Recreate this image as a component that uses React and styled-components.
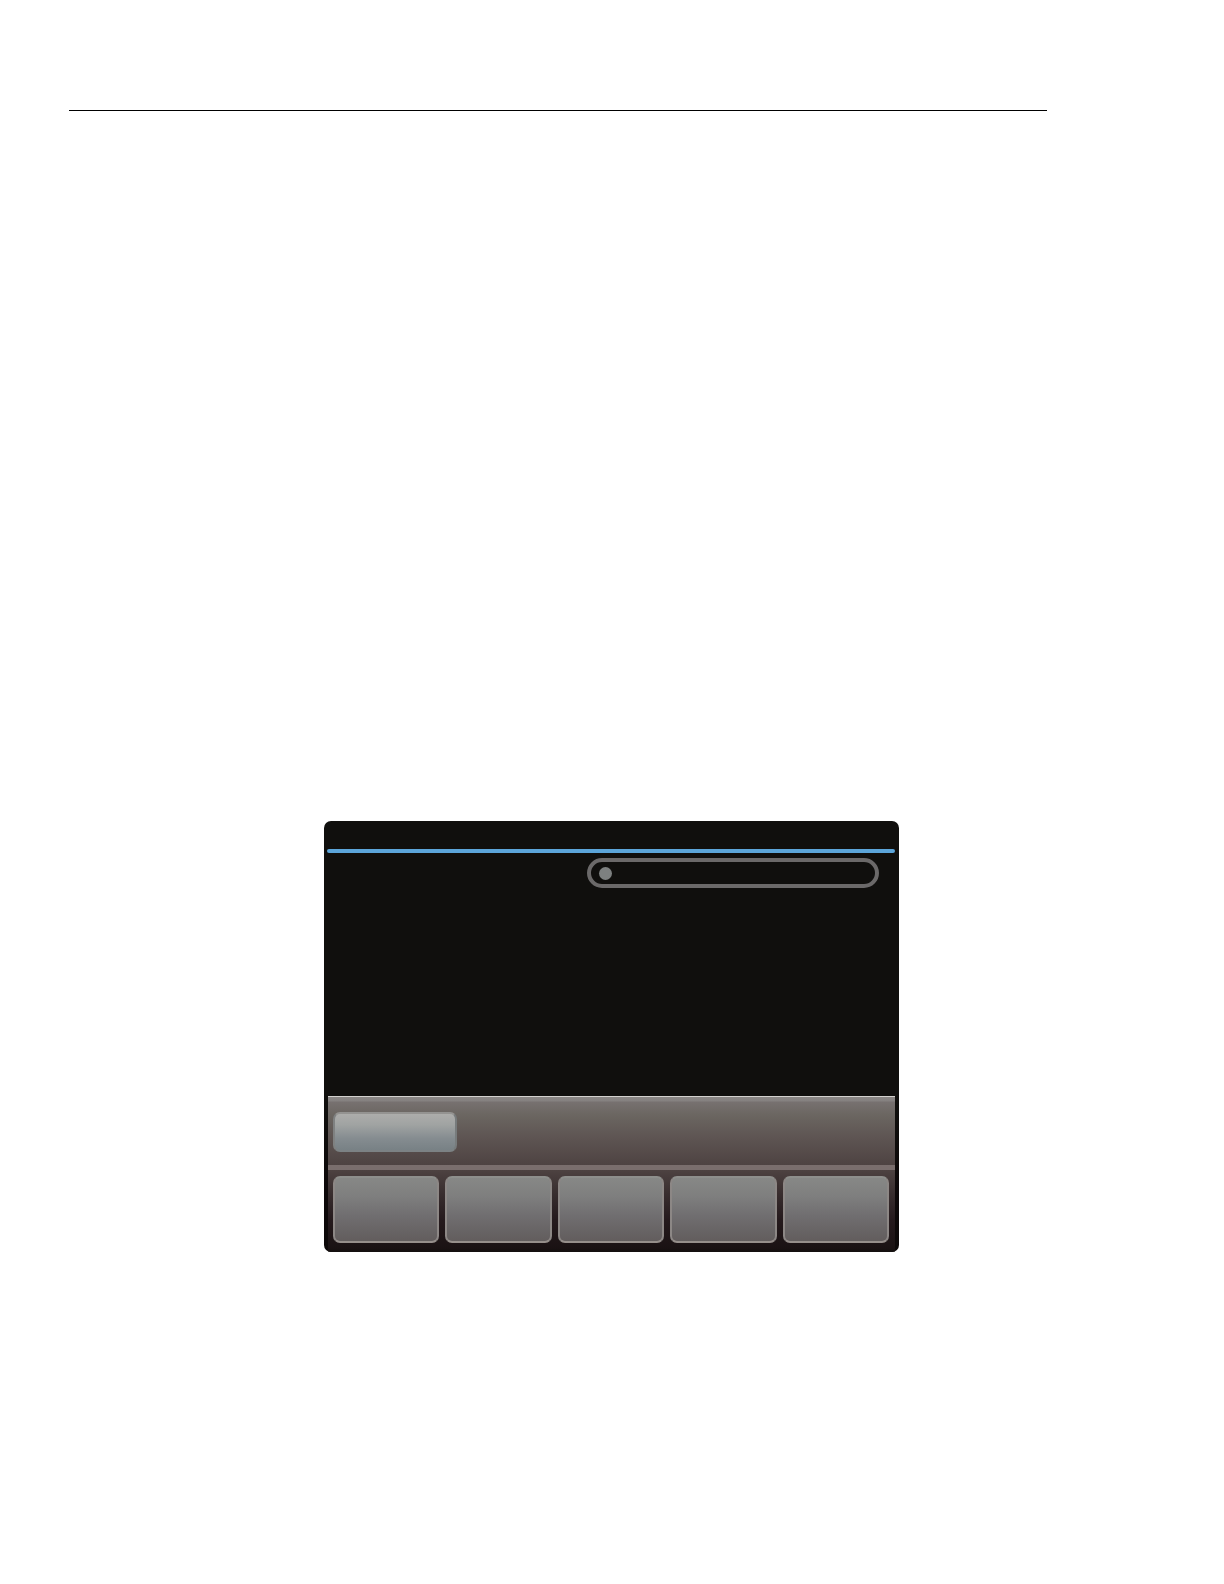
import React from "react";
import styled, { createGlobalStyle } from "styled-components";

const GlobalStyle = createGlobalStyle`
  * { box-sizing: border-box; }
  body {
    margin: 0;
    background: #ffffff;
    font-family: "Liberation Sans", Arial, sans-serif;
  }
`;

const Page = styled.main`
  display: flex;
  flex-direction: column;
  min-height: 100vh;
  padding: 110px 1px 96px 0;
`;

const HeaderRule = styled.hr`
  align-self: stretch;
  height: 1px;
  margin: 0 176px 710px 69px;
  border: 0;
  background: #000000;
`;

const Device = styled.section`
  display: flex;
  flex-direction: column;
  width: 100%;
  max-width: 575px;
  margin: 0 auto;
  padding: 28px 4px 0 3px;
  border-radius: 7px;
  overflow: hidden;
  background: linear-gradient(#100f0d 0, #100f0d 290px, #0d0809 370px, #0d0909 100%);
`;

const AccentBar = styled.div`
  height: 4px;
  border-radius: 2px;
  background: #5ca5d9;
`;

const Screen = styled.div`
  display: flex;
  justify-content: flex-end;
  align-items: flex-start;
  min-height: 243px;
  padding: 5px 16px 0;
`;

const Field = styled.label`
  display: flex;
  align-items: center;
  gap: 8px;
  width: 292px;
  height: 30px;
  padding: 0 12px 0 8px;
  border: 4px solid #6b6969;
  border-radius: 15px;
`;

const Dot = styled.span`
  flex: none;
  width: 13px;
  height: 13px;
  border-radius: 50%;
  background: #7d8080;
`;

const FieldInput = styled.input`
  flex: 1;
  min-width: 0;
  padding: 0;
  border: 0;
  outline: 0;
  background: transparent;
  color: #d0d0d0;
  font: inherit;
  font-size: 14px;
`;

const TabStrip = styled.div`
  height: 74px;
  margin: 0 0 0 1px;
  padding: 15px 5px 0;
  border-top: 1px solid #d3d1cf;
  border-bottom: 5px solid #7a6e6d;
  background: linear-gradient(#8b8785 0, #858180 4px, #777170 5px, #6b6661 18px, #5e5553 40px, #4e4342 100%);
  background-clip: padding-box;
`;

const Tab = styled.button`
  display: block;
  width: 124px;
  height: 40px;
  padding: 0;
  border: 2px solid;
  border-color: #949391 #777b7c #7c8284 #7f8181;
  border-radius: 7px;
  background: linear-gradient(#adadab, #a0a3a2 30%, #858c90 68%, #788185);
`;

const SoftKeys = styled.div`
  display: grid;
  grid-template-columns: repeat(5, 1fr);
  gap: 6px;
  margin: 0 0 0 1px;
  padding: 6px 6px 9px 5px;
  background: linear-gradient(#4d4241 0, #382d2e 24px, #251a1d 50px, #1a1213 78px, #130f0e 100%);
`;

const SoftKey = styled.button`
  height: 67px;
  padding: 0;
  border: 2px solid;
  border-color: #8e8f8c #8c8785 #968f8b #8c8785;
  border-radius: 7px;
  background: linear-gradient(#878886, #7e7e7e 30%, #706e70 60%, #625d5d);
`;

const keys = [1, 2, 3, 4, 5];

export default function App() {
  return (
    <>
      <GlobalStyle />
      <Page>
        <HeaderRule />
        <Device>
          <AccentBar />
          <Screen>
            <Field>
              <Dot />
              <FieldInput type="text" aria-label="Status" />
            </Field>
          </Screen>
          <TabStrip>
            <Tab type="button" aria-label="Tab" />
          </TabStrip>
          <SoftKeys>
            {keys.map((key) => (
              <SoftKey key={key} type="button" aria-label={`Softkey ${key}`} />
            ))}
          </SoftKeys>
        </Device>
      </Page>
    </>
  );
}
